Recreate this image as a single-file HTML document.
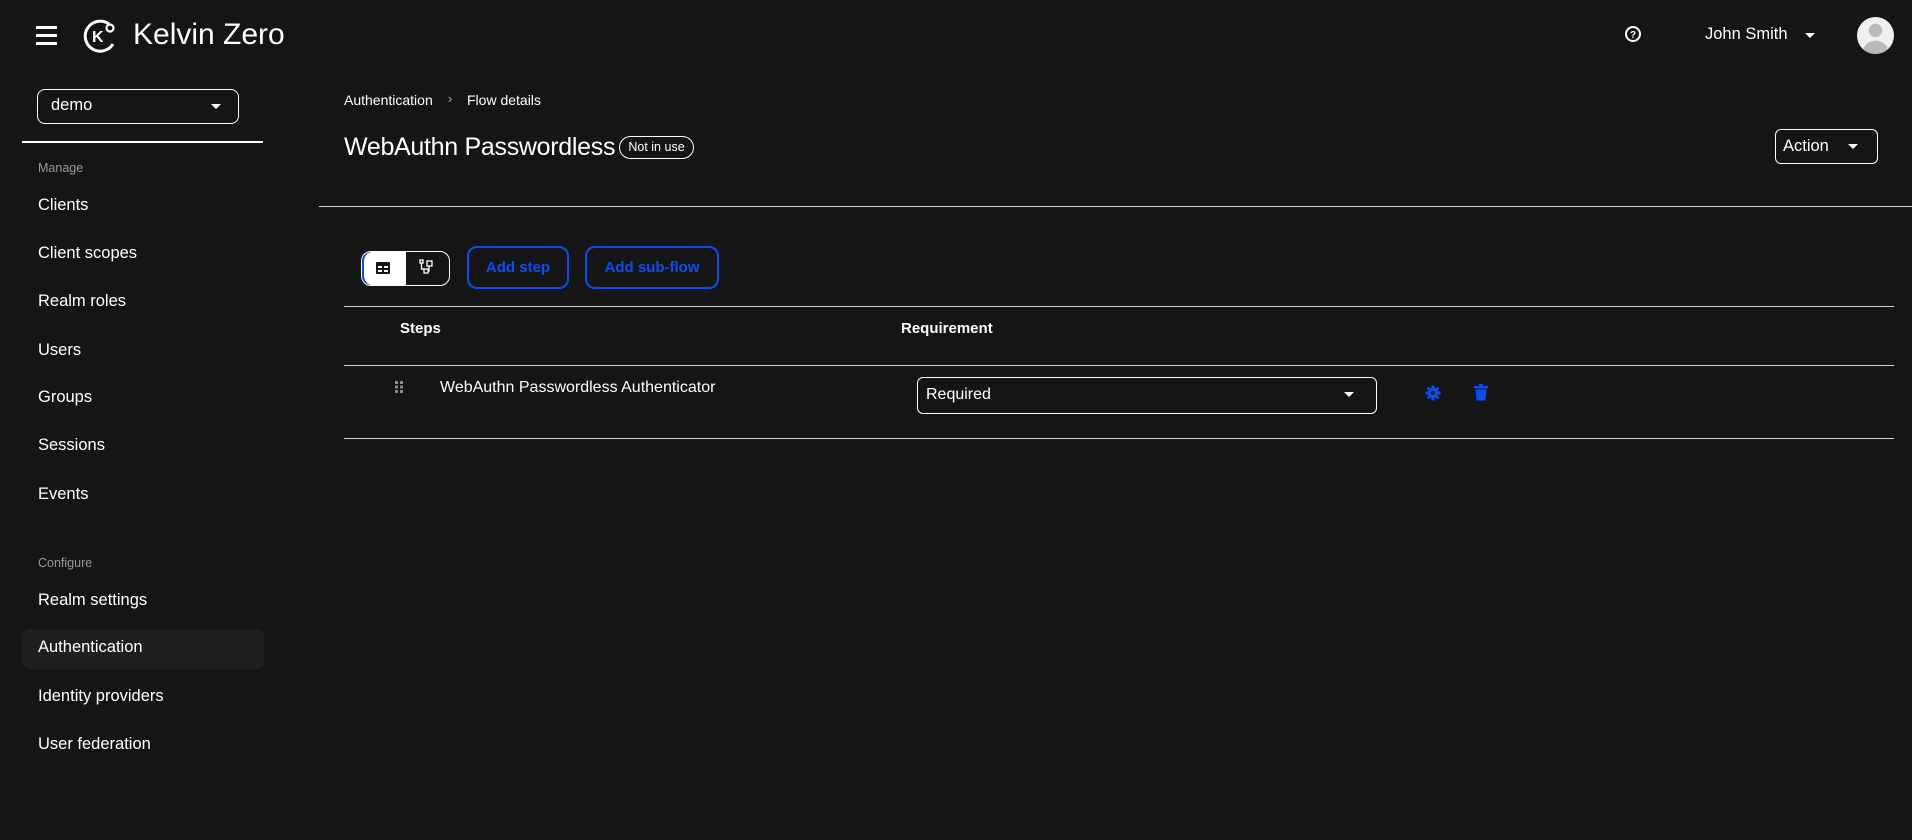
<!DOCTYPE html>
<html><head><meta charset="utf-8"><style>
*{margin:0;padding:0;box-sizing:border-box}
body{width:1912px;height:840px;background:#151515;color:#fff;font-family:"Liberation Sans",sans-serif;position:relative;overflow:hidden}
.a{position:absolute;white-space:nowrap}
.nav{left:38px;font-size:16.5px;color:#fff}
.sec{left:38px;font-size:12.5px;color:#9a9a9a}
.line{position:absolute;background:#d2d2d2;height:1px}
.caret{position:absolute;width:0;height:0;border-left:5px solid transparent;border-right:5px solid transparent;border-top:5px solid #fff}
.btn{position:absolute;border:2px solid #0b4ef0;border-radius:10px;color:#0b4ef0;font-size:15px;font-weight:bold;display:flex;align-items:center;justify-content:center}
</style></head><body>
<div class="a" style="left:36px;top:26px;width:21px;height:3px;background:#fff"></div>
<div class="a" style="left:36px;top:34px;width:21px;height:3px;background:#fff"></div>
<div class="a" style="left:36px;top:42px;width:21px;height:3px;background:#fff"></div>
<svg class="a" style="left:82px;top:17px" width="38" height="38" viewBox="0 0 38 38"><path d="M27 7A15 15 0 1 0 31 27" fill="none" stroke="#fff" stroke-width="3"/><text x="10" y="25" font-family="Liberation Sans" font-weight="bold" font-size="16" fill="#fff">K</text><circle cx="28" cy="11" r="3.5" fill="none" stroke="#fff" stroke-width="2.2"/></svg>
<div class="a" style="left:133px;top:18px;font-size:30px;color:#fff">Kelvin Zero</div>
<svg class="a" style="left:1624px;top:25px" width="18" height="18" viewBox="0 0 18 18"><circle cx="9" cy="9" r="7" fill="none" stroke="#fff" stroke-width="2"/><text x="9" y="13" text-anchor="middle" font-size="10" font-weight="bold" fill="#fff" font-family="Liberation Sans">?</text></svg>
<div class="a" style="left:1705px;top:25px;font-size:16.5px">John Smith</div>
<div class="caret" style="left:1805px;top:33px"></div>
<svg class="a" style="left:1857px;top:17px" width="37" height="37" viewBox="0 0 36 36"><clipPath id="c"><circle cx="18" cy="18" r="18"/></clipPath><circle cx="18" cy="18" r="18" fill="#f0f0f0"/><g clip-path="url(#c)" fill="#b8bbbe"><circle cx="18" cy="13" r="6.5"/><ellipse cx="18" cy="33" rx="12" ry="10"/></g></svg>
<div class="a" style="left:37px;top:89px;width:202px;height:35px;border:1px solid #fff;border-radius:8px"></div>
<div class="a" style="left:51px;top:96px;font-size:16.5px">demo</div>
<div class="caret" style="left:211px;top:104px"></div>
<div class="line" style="left:22px;top:141px;width:241px;height:2px;background:#fff"></div>
<div class="a sec" style="top:161px">Manage</div>
<div class="a nav" style="top:196px">Clients</div>
<div class="a nav" style="top:244px">Client scopes</div>
<div class="a nav" style="top:292px">Realm roles</div>
<div class="a nav" style="top:341px">Users</div>
<div class="a nav" style="top:388px">Groups</div>
<div class="a nav" style="top:436px">Sessions</div>
<div class="a nav" style="top:485px">Events</div>
<div class="a sec" style="top:556px">Configure</div>
<div class="a nav" style="top:591px">Realm settings</div>
<div class="a" style="left:22px;top:629px;width:242px;height:40px;background:#1f1f1f;border-radius:8px"></div>
<div class="a nav" style="top:638px">Authentication</div>
<div class="a nav" style="top:687px">Identity providers</div>
<div class="a nav" style="top:735px">User federation</div>
<div class="a" style="left:344px;top:92px;font-size:14px">Authentication</div>
<div class="a" style="left:448px;top:91px;font-size:13px;color:#aaa">›</div>
<div class="a" style="left:467px;top:92px;font-size:14px">Flow details</div>
<div class="a" style="left:344px;top:133px;font-size:25px;font-weight:normal;letter-spacing:-0.3px">WebAuthn Passwordless</div>
<div class="a" style="left:619px;top:136px;width:75px;height:23px;border:1px solid #fff;border-radius:12px;font-size:12.5px;text-align:center;line-height:21px">Not in use</div>
<div class="a" style="left:1775px;top:129px;width:103px;height:35px;border:1px solid #fff;border-radius:6px"></div>
<div class="a" style="left:1783px;top:137px;font-size:16.5px">Action</div>
<div class="caret" style="left:1848px;top:144px"></div>
<div class="line" style="left:319px;top:206px;width:1593px"></div>
<div class="a" style="left:361px;top:251px;width:89px;height:35px;border:1px solid #fff;border-radius:10px;overflow:hidden"><div style="width:44px;height:100%;background:#fff;border-left:2px solid #0b4ef0;border-radius:10px 0 0 10px"></div></div>
<svg class="a" style="left:376px;top:262px" width="14" height="12" viewBox="0 0 14 12"><rect width="14" height="12" rx="1" fill="#151515"/><rect x="2" y="4" width="4" height="2" fill="#fff"/><rect x="8" y="4" width="4" height="2" fill="#fff"/><rect x="2" y="8" width="4" height="2" fill="#fff"/><rect x="8" y="8" width="4" height="2" fill="#fff"/></svg>
<svg class="a" style="left:419px;top:259px" width="14" height="16" viewBox="0 0 14 16" fill="none" stroke="#fff" stroke-width="1.3"><rect x="1" y="1" width="3" height="3"/><rect x="8" y="2" width="5" height="5"/><rect x="5" y="10" width="4" height="4"/><path d="M2.5 4v6h2.5M10 7v5h-1"/></svg>
<div class="btn" style="left:467px;top:246px;width:102px;height:43px">Add step</div>
<div class="btn" style="left:585px;top:246px;width:134px;height:43px">Add sub-flow</div>
<div class="line" style="left:344px;top:306px;width:1550px"></div>
<div class="a" style="left:400px;top:320px;font-size:15px;font-weight:bold">Steps</div>
<div class="a" style="left:901px;top:320px;font-size:15px;font-weight:bold">Requirement</div>
<div class="line" style="left:344px;top:365px;width:1550px"></div>
<svg class="a" style="left:394px;top:380px" width="10" height="14" viewBox="0 0 10 14" fill="#8a8a8a"><rect x="1" y="1" width="3" height="3"/><rect x="6" y="1" width="3" height="3"/><rect x="1" y="5.5" width="3" height="3"/><rect x="6" y="5.5" width="3" height="3"/><rect x="1" y="10" width="3" height="3"/><rect x="6" y="10" width="3" height="3"/></svg>
<div class="a" style="left:440px;top:379px;font-size:16px">WebAuthn Passwordless Authenticator</div>
<div class="a" style="left:917px;top:377px;width:460px;height:37px;border:1px solid #fff;border-radius:6px"></div>
<div class="a" style="left:926px;top:386px;font-size:16px">Required</div>
<div class="caret" style="left:1344px;top:392px"></div>
<svg class="a" style="left:1425px;top:385px" width="16" height="16" viewBox="0 0 16 16"><g fill="#0b4ef0"><circle cx="8" cy="8" r="5.2"/><g><rect x="6.5" y="0.5" width="3" height="15"/><rect x="0.5" y="6.5" width="15" height="3"/><rect x="6.5" y="0.5" width="3" height="15" transform="rotate(45 8 8)"/><rect x="6.5" y="0.5" width="3" height="15" transform="rotate(-45 8 8)"/></g></g><circle cx="8" cy="8" r="2" fill="#151515"/></svg>
<svg class="a" style="left:1474px;top:384px" width="14" height="17" viewBox="0 0 14 17" fill="#0b4ef0"><rect x="0" y="2" width="14" height="2.5"/><rect x="5" y="0" width="4" height="2"/><path d="M1.5 5.5h11l-1 11h-9z"/></svg>
<div class="line" style="left:344px;top:438px;width:1550px"></div>
</body></html>
